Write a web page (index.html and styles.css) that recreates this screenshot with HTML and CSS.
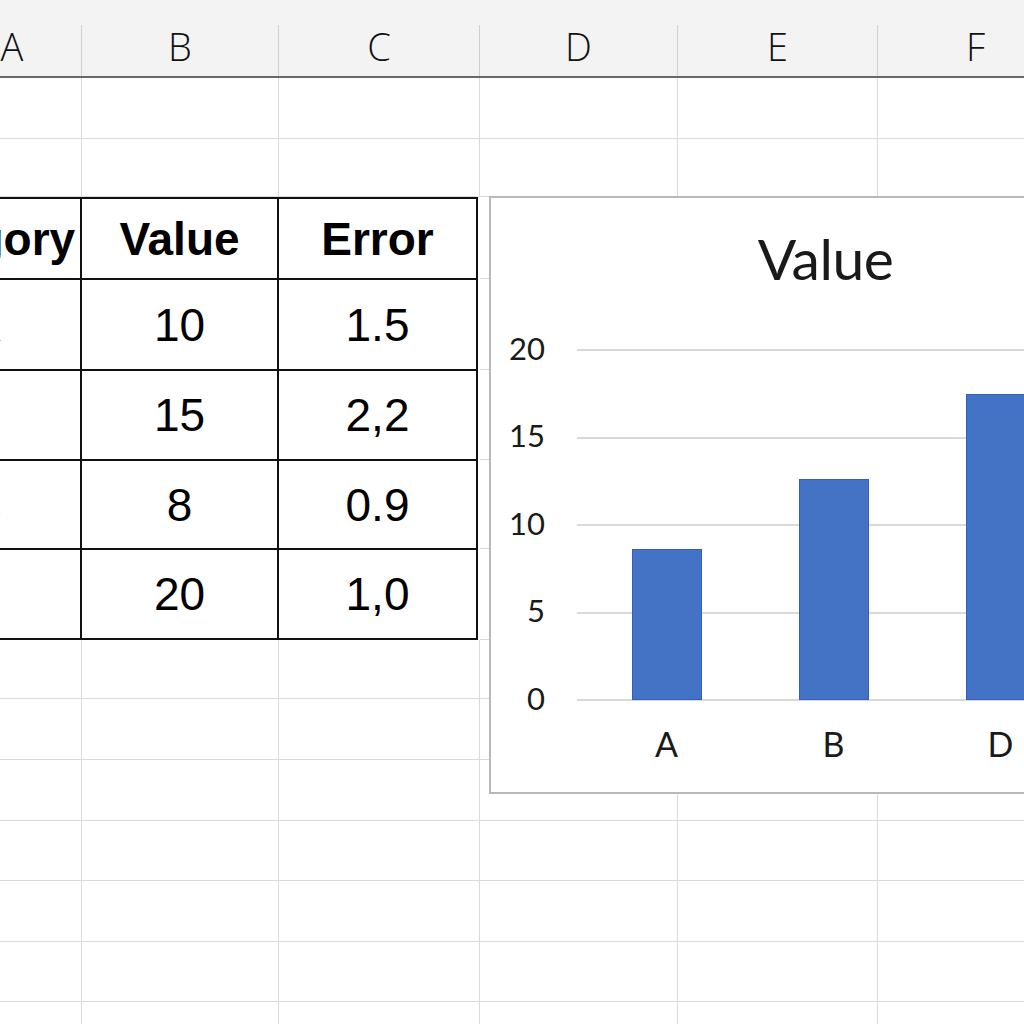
FILE: index.html
```html
<!DOCTYPE html>
<html lang="en">
<head>
<meta charset="utf-8">
<title>Sheet</title>
<link rel="stylesheet" href="styles.css">
</head>
<body>
<div class="app">
  <div class="topstrip"></div>
  <div class="colheads">
    <div class="ch">A</div>
    <div class="ch">B</div>
    <div class="ch">C</div>
    <div class="ch">D</div>
    <div class="ch">E</div>
    <div class="ch">F</div>
  </div>
  <div class="sheet">
    <div class="dtable">
      <div class="tc th-a th">Category</div>
      <div class="tc th">Value</div>
      <div class="tc th">Error</div>
      <div class="tc tc-a link">A</div>
      <div class="tc">10</div>
      <div class="tc">1.5</div>
      <div class="tc tc-a link">B</div>
      <div class="tc">15</div>
      <div class="tc">2,2</div>
      <div class="tc tc-a link">C</div>
      <div class="tc">8</div>
      <div class="tc">0.9</div>
      <div class="tc tc-a link">D</div>
      <div class="tc">20</div>
      <div class="tc">1,0</div>
    </div>
    <div class="c"></div><div class="c"></div><div class="c"></div><div class="c"></div><div class="c"></div><div class="c"></div>
    <div class="c"></div><div class="c"></div><div class="c"></div><div class="c"></div><div class="c"></div><div class="c"></div>
    <div class="c"></div><div class="c"></div><div class="c"></div>
    <div class="c"></div><div class="c"></div><div class="c"></div>
    <div class="c"></div><div class="c"></div><div class="c"></div>
    <div class="c"></div><div class="c"></div><div class="c"></div>
    <div class="c"></div><div class="c"></div><div class="c"></div>
    <div class="c"></div><div class="c"></div><div class="c"></div><div class="c"></div><div class="c"></div><div class="c"></div>
    <div class="c"></div><div class="c"></div><div class="c"></div><div class="c"></div><div class="c"></div><div class="c"></div>
    <div class="c"></div><div class="c"></div><div class="c"></div><div class="c"></div><div class="c"></div><div class="c"></div>
    <div class="c"></div><div class="c"></div><div class="c"></div><div class="c"></div><div class="c"></div><div class="c"></div>
    <div class="c"></div><div class="c"></div><div class="c"></div><div class="c"></div><div class="c"></div><div class="c"></div>
    <div class="c"></div><div class="c"></div><div class="c"></div><div class="c"></div><div class="c"></div><div class="c"></div>
    <div class="c"></div><div class="c"></div><div class="c"></div><div class="c"></div><div class="c"></div><div class="c"></div>
  </div>

  <div class="chart">
    <div class="chart-title">Value</div>
    <div class="plot">
      <div class="yaxis">
        <div class="tick"><span>20</span></div>
        <div class="tick"><span>15</span></div>
        <div class="tick"><span>10</span></div>
        <div class="tick"><span>5</span></div>
        <div class="tick"><span>0</span></div>
      </div>
      <div class="area">
        <div class="gridlines">
          <div class="gl"></div>
          <div class="gl"></div>
          <div class="gl"></div>
          <div class="gl"></div>
          <div class="gl"></div>
        </div>
        <div class="bars">
          <div class="band"><div class="bar" style="height:43.2%"></div></div>
          <div class="band"><div class="bar" style="height:63.2%"></div></div>
          <div class="band"><div class="bar" style="height:87.5%"></div></div>
        </div>
      </div>
      <div class="cats">
        <div class="cat">A</div>
        <div class="cat">B</div>
        <div class="cat">D</div>
      </div>
    </div>
  </div>
</div>
</body>
</html>
```

FILE: styles.css
```css
html, body {
  margin: 0;
  padding: 0;
  background: #ffffff;
}

.app {
  position: relative;
  width: 1024px;
  height: 1024px;
  overflow: hidden;
  background: #ffffff;
}

.topstrip {
  height: 25px;
  background: #f3f3f3;
}

.colheads {
  display: grid;
  grid-template-columns: 139px 197px 201px 198px 200px 196px;
  margin-left: -57px;
  height: 53px;
  box-sizing: border-box;
  background: #f3f3f3;
  border-bottom: 2px solid #686868;
}

.ch {
  display: flex;
  align-items: center;
  justify-content: center;
  padding-bottom: 9px;
  box-sizing: border-box;
  border-right: 1px solid #cfcfcf;
  font-family: "Open Sans", "Noto Sans", sans-serif;
  font-size: 38px;
  font-weight: 300;
  line-height: 38px;
  color: #111;
}

.sheet {
  display: grid;
  grid-template-columns: 139px 197px 201px 198px 200px 196px;
  grid-template-rows: 61px 58px 82px 91px 90px 89px 91px 59px 61px 61px 60px 61px 60px 61px;
  margin-left: -57px;
}

.c {
  box-sizing: border-box;
  border-right: 1px solid #dadada;
  border-bottom: 1px solid #dadada;
}

.dtable {
  grid-column: 1 / 4;
  grid-row: 3 / 8;
  margin-right: 2px;
  display: grid;
  grid-template-columns: 139px 197px 1fr;
  grid-template-rows: 81px 91px 90px 89px 90px;
  border-top: 2px solid #111;
  background: #fff;
}

.tc {
  box-sizing: border-box;
  border-right: 2px solid #111;
  border-bottom: 2px solid #111;
  display: flex;
  align-items: center;
  justify-content: center;
  overflow: hidden;
  white-space: nowrap;
  font-family: "Liberation Sans", Arial, sans-serif;
  font-size: 46px;
  line-height: 46px;
  color: #000;
}

.th-a {
  padding-right: 72px;
}

.tc-a {
  padding-right: 53px;
}

.th {
  font-weight: bold;
}

.link {
  color: #1f4fc0;
}

.chart {
  position: absolute;
  left: 489px;
  top: 196px;
  width: 673px;
  height: 598px;
  box-sizing: border-box;
  border: 2px solid #b8b8b8;
  background: #ffffff;
  font-family: Lato, "Open Sans", sans-serif;
  color: #1a1a1a;
}

.chart-title {
  height: 151px;
  box-sizing: border-box;
  padding-top: 32px;
  text-align: center;
  font-size: 57px;
  line-height: 57px;
  letter-spacing: -0.5px;
}

.plot {
  display: grid;
  grid-template-columns: 54px 1fr;
  column-gap: 32px;
}

.yaxis {
  height: 352px;
  display: flex;
  flex-direction: column;
  justify-content: space-between;
}

.tick {
  height: 2px;
  display: flex;
  align-items: center;
  justify-content: flex-end;
  font-size: 31px;
  line-height: 36px;
}

.tick span {
  padding-bottom: 5px;
}

.area {
  display: grid;
}

.gridlines,
.bars {
  grid-area: 1 / 1;
  height: 352px;
  box-sizing: border-box;
}

.gridlines {
  display: flex;
  flex-direction: column;
  justify-content: space-between;
}

.gl {
  height: 2px;
  background: #d9d9d9;
}

.bars {
  display: flex;
  align-items: flex-end;
  padding: 1px 0 1px 6px;
}

.band {
  width: 167px;
  height: 100%;
  display: flex;
  align-items: flex-end;
  justify-content: center;
}

.bar {
  width: 70px;
  box-sizing: border-box;
  background: #4472c4;
  border: 1px solid #2f5fc4;
}

.cats {
  grid-column: 2;
  display: flex;
  padding-left: 6px;
  margin-top: 23px;
}

.cat {
  width: 167px;
  text-align: center;
  font-size: 34px;
  line-height: 40px;
}
```
